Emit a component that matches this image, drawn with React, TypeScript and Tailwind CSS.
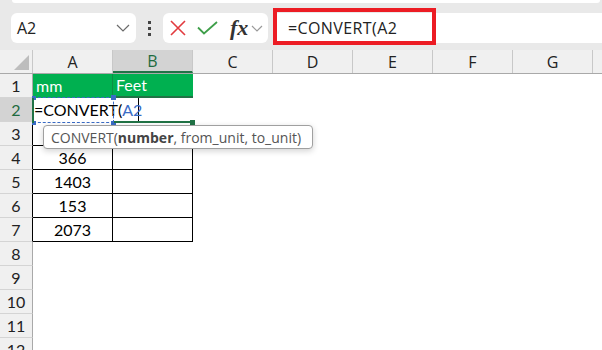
import React from 'react';

const COLS = ['A', 'B', 'C', 'D', 'E', 'F', 'G'];
const VALUES = ['', '366', '1403', '153', '2073'];

function Chevron() {
  return (
    <svg width="14" height="8" viewBox="0 0 14 8" fill="none">
      <path d="M1 1l6 6 6-6" stroke="#6b6b6b" strokeWidth="1.2" />
    </svg>
  );
}

function RowHeader({ n, active, edge }: { n: number; active?: boolean; edge?: boolean }) {
  return (
    <div
      className={`w-[33px] shrink-0 flex items-center justify-center border-r border-b border-b-[#d4d4d4] ${
        edge ? 'border-r-black' : 'border-r-[#a9a9a9]'
      } ${active ? 'bg-[#d3d3d3] text-[#1e6b40]' : 'bg-[#f0f0f0] text-[#222]'}`}
    >
      {n}
    </div>
  );
}

export default function App() {
  return (
    <div className="w-[602px] h-[350px] overflow-hidden bg-white font-['Open_Sans',sans-serif] text-[16px]">
      {/* formula bar */}
      <div className="relative h-[50px] bg-[#e9e9e9]">
        <div className="ml-[12px] mr-[2px] h-[3px] bg-white rounded-b-md" />
        <div className="flex items-center pt-[10px]">
          <div className="ml-[11px] w-[125px] h-[30px] bg-white rounded-md flex items-center justify-between pl-[6px] pr-[6px] text-[16px] text-[#222]">
            <span>A2</span>
            <Chevron />
          </div>
          <div className="w-[27px] flex flex-col items-center gap-[3px]">
            <span className="w-[3px] h-[3px] bg-[#444]" />
            <span className="w-[3px] h-[3px] bg-[#444]" />
            <span className="w-[3px] h-[3px] bg-[#444]" />
          </div>
          <div className="w-[105px] h-[30px] bg-white rounded-md flex items-center pl-[7px] gap-[11px]">
            <svg width="16" height="16" viewBox="0 0 16 16">
              <path d="M1 1l14 14M15 1L1 15" stroke="#e23b3f" strokeWidth="1.6" />
            </svg>
            <svg width="21" height="14" viewBox="0 0 21 14" fill="none">
              <path d="M1 6.5l6 6L20 1" stroke="#3f9f4a" strokeWidth="1.8" />
            </svg>
            <div className="flex items-center gap-[3px]">
              <span className="font-['Liberation_Serif',serif] italic font-bold text-[22px] leading-none text-[#333] ml-[1px]">fx</span>
              <svg width="12" height="7" viewBox="0 0 12 7" fill="none">
                <path d="M1 1l5 5 5-5" stroke="#9a9a9a" strokeWidth="1.2" />
              </svg>
            </div>
          </div>
          <div className="ml-[5px] flex-1 h-[30px] bg-white rounded-l-md flex items-center pl-[15px] text-[16px] text-[#222] tracking-[0.4px]">
            =CONVERT(A2
          </div>
        </div>
        <div className="absolute left-[273px] top-[8px] w-[163px] h-[37px] border-4 border-[#ec1c24]" />
      </div>

      {/* sheet */}
      <div className="relative">
        <div className="flex h-[24px] bg-[#f0f0f0] border-b border-[#a9a9a9]">
          <div className="w-[33px] shrink-0 relative border-r border-[#c8c8c8]">
            <div className="absolute right-[3px] bottom-[3px] w-0 h-0 border-l-[15px] border-l-transparent border-b-[15px] border-b-[#bdbdbd]" />
          </div>
          {COLS.map((c) => (
            <div
              key={c}
              className={`w-[80px] shrink-0 flex items-center justify-center border-r border-[#c8c8c8] ${
                c === 'B' ? 'bg-[#d3d3d3] text-[#1e6b40] border-b-2 border-b-[#217346]' : 'text-[#222]'
              }`}
            >
              {c}
            </div>
          ))}
          <div className="flex-1" />
        </div>

        <div className="font-['Lato',sans-serif]">
          <div className="flex h-[24px]">
            <RowHeader n={1} />
            <div className="w-[80px] bg-[#00b050] text-white pl-[3px] flex items-center border-r border-[#0c8f45]">mm</div>
            <div className="w-[80px] bg-[#00b050] text-white pl-[3px] flex items-center border-b-2 border-[#217346]">Feet</div>
          </div>
          <div className="flex h-[24px]">
            <RowHeader n={2} active />
            <div className="w-[80px] relative">
              <div className="absolute left-0 top-0 w-[106px] h-[24px] bg-white border-r border-black flex items-center pl-[1px] whitespace-nowrap z-10">
                <span className="text-black">=CONVERT(</span>
                <span className="text-[#3a6cc6]">A2</span>
              </div>
            </div>
          </div>
          {VALUES.map((v, i) => (
            <div key={i} className="flex h-[24px]">
              <RowHeader n={i + 3} edge />
              <div className="w-[80px] flex items-center justify-center border-r border-b border-black">{v}</div>
              <div className="w-[80px] border-r border-b border-black" />
            </div>
          ))}
          {[8, 9, 10, 11, 12].map((n) => (
            <div key={n} className="flex h-[24px]">
              <RowHeader n={n} />
            </div>
          ))}
        </div>

        {/* reference marquee on A2 */}
        <div className="absolute left-[33px] top-[47px] w-[81px] h-[26px] border border-dashed border-[#3a6cc6] z-20 pointer-events-none" />
        <div className="absolute left-[32px] top-[46px] w-[4px] h-[4px] bg-[#3a6cc6] z-20" />
        <div className="absolute left-[111px] top-[45px] w-[5px] h-[5px] bg-[#3a6cc6] z-20" />
        <div className="absolute left-[32px] top-[71px] w-[4px] h-[4px] bg-[#3a6cc6] z-20" />
        <div className="absolute left-[111px] top-[71px] w-[5px] h-[5px] bg-[#3a6cc6] z-20" />
        {/* active cell edge */}
        <div className="absolute left-[32px] top-[48px] w-[2px] h-[25px] bg-[#217346] z-20" />
        <div className="absolute left-[114px] top-[71px] w-[78px] h-[2px] bg-[#217346] z-20" />
        <div className="absolute left-[190px] top-[70px] w-[5px] h-[5px] bg-[#217346] z-20" />

        {/* function tooltip */}
        <div className="absolute left-[43px] top-[75px] w-[270px] h-[24px] bg-white border border-[#a0a0a0] rounded-[4px] shadow-[0_2px_6px_rgba(0,0,0,0.18)] flex items-center pl-[7px] text-[14px] text-[#555] whitespace-nowrap z-30">
          CONVERT(<span className="font-bold text-[#444]">number</span>, from_unit, to_unit)
        </div>
      </div>
    </div>
  );
}
